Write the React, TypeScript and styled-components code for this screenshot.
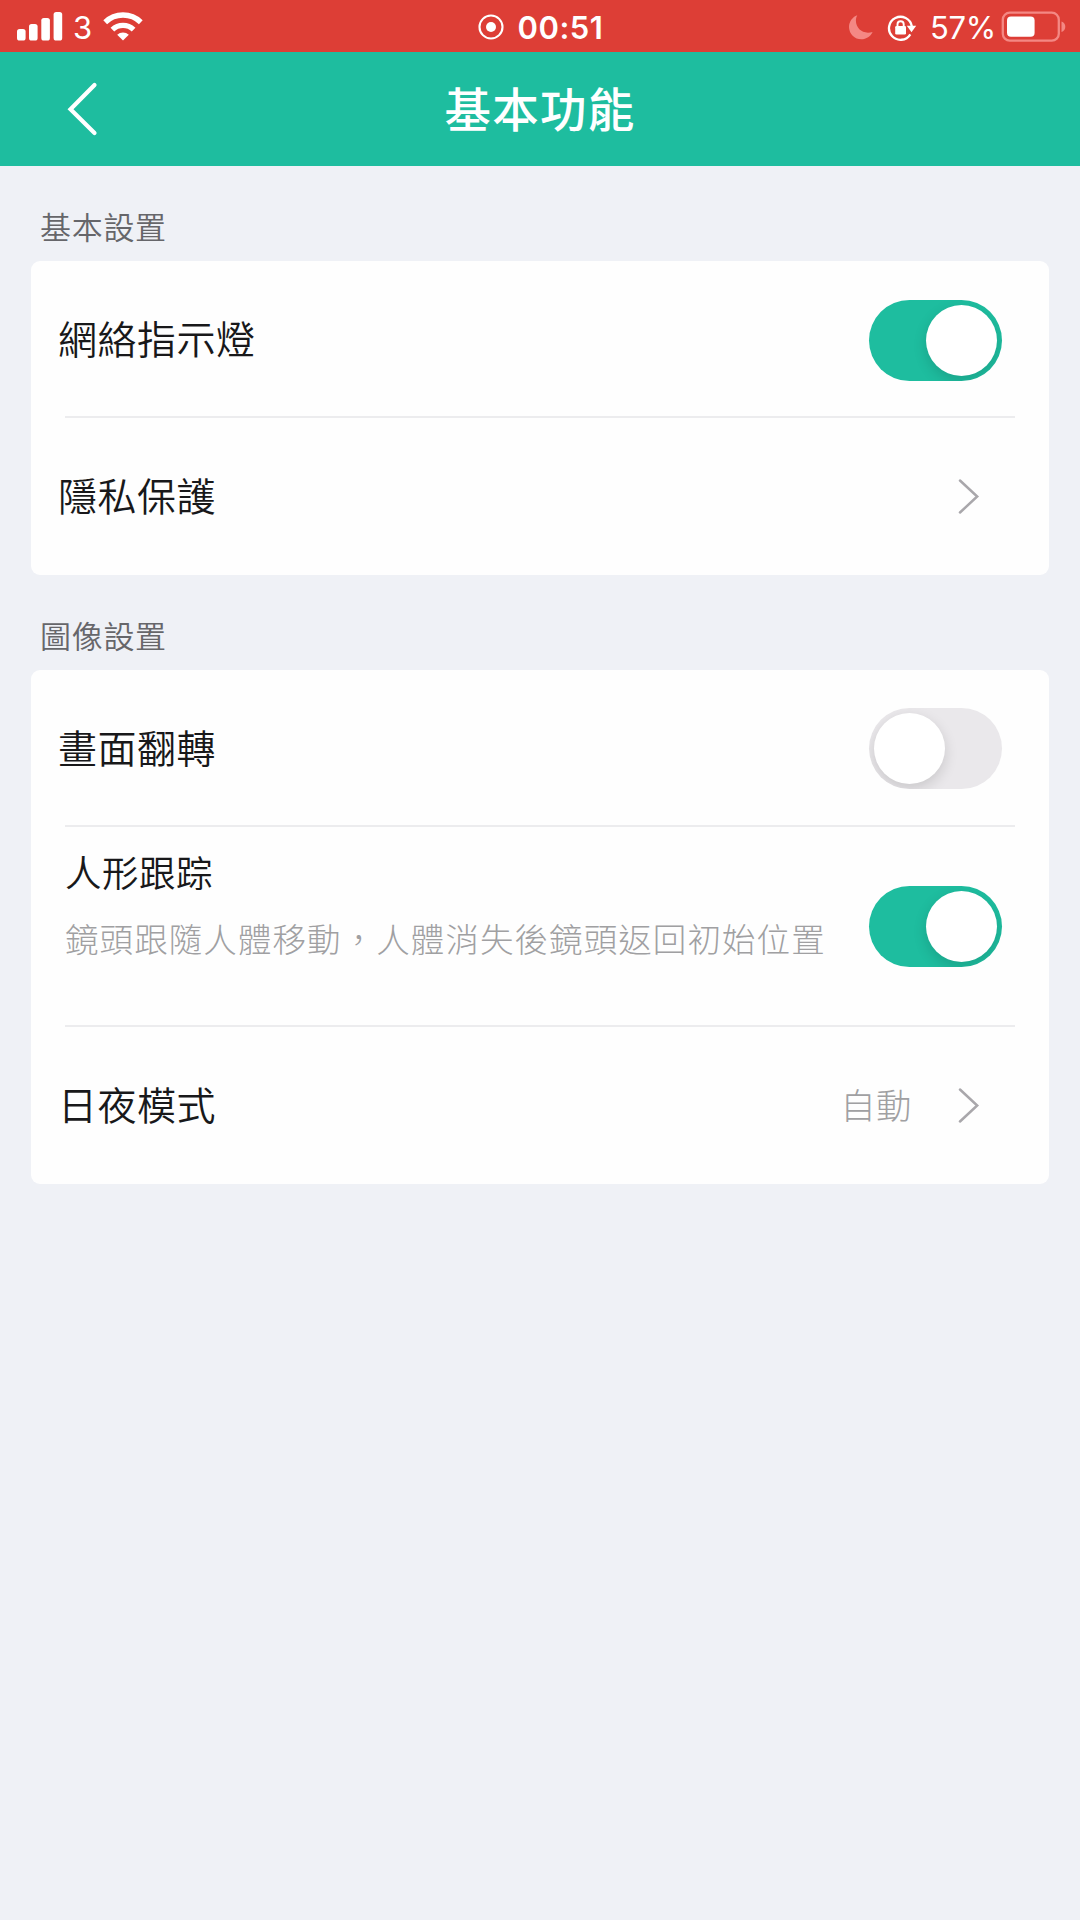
import React, { useState } from "react";
import styled, { createGlobalStyle } from "styled-components";

const GlobalStyle = createGlobalStyle`
  *, *::before, *::after { box-sizing: border-box; }
  body {
    margin: 0;
    background: #eff1f6;
    font-family: Inter, "Noto Sans CJK TC", sans-serif;
  }
`;

const Screen = styled.div`
  width: 1080px;
  min-height: 1920px;
  display: flex;
  flex-direction: column;
  background: #eff1f6;
`;

const StatusBar = styled.div`
  height: 52px;
  padding: 0 14px 0 17px;
  display: grid;
  grid-template-columns: 1fr auto 1fr;
  align-items: center;
  background: #dd3e36;
  color: #fff;
`;

const StatusGroup = styled.div<{ $justify?: string }>`
  display: flex;
  align-items: center;
  justify-content: ${(p) => p.$justify ?? "flex-start"};
  height: 52px;
`;

const StatusText = styled.span<{ $size: number; $weight?: number; $spacing?: number; $gap: string }>`
  font-size: ${(p) => p.$size}px;
  font-weight: ${(p) => p.$weight ?? 400};
  letter-spacing: ${(p) => p.$spacing ?? 0}px;
  margin: ${(p) => p.$gap};
  line-height: 52px;
  padding-top: 3px;
  white-space: nowrap;
`;

const Icon = styled.svg<{ $gap?: string }>`
  display: block;
  flex: none;
  margin: ${(p) => p.$gap ?? "0"};
`;

const NavBar = styled.header`
  height: 114px;
  padding: 0 66px;
  display: grid;
  grid-template-columns: 60px 1fr 60px;
  align-items: center;
  background: #1ebd9f;
`;

const BackButton = styled.button`
  border: 0;
  padding: 0;
  background: none;
  cursor: pointer;
`;

const Title = styled.h1`
  margin: 0;
  padding-bottom: 4px;
  font-family: "Noto Sans CJK TC", sans-serif;
  font-size: 46.5px;
  line-height: 110px;
  font-weight: 500;
  letter-spacing: 1.2px;
  text-align: center;
  color: #fff;
`;

const Content = styled.main`
  padding: 0 31px;
`;

const SectionTitle = styled.h2`
  height: 95px;
  margin: 0;
  padding: 39px 0 0 9px;
  font-size: 31px;
  line-height: 46px;
  font-weight: 350;
  letter-spacing: 0.7px;
  color: #66666a;
`;

const Card = styled.section`
  border-radius: 9px;
  background: #fefefe;
`;

const Divider = styled.hr`
  height: 2px;
  margin: 0 34px;
  border: 0;
  background: #ececee;
`;

const Row = styled.div<{ $height: number; $top?: number }>`
  height: ${(p) => p.$height}px;
  padding: ${(p) => p.$top ?? 0}px 47px 0 27px;
  display: flex;
  align-items: center;
  justify-content: space-between;
`;

const Label = styled.span`
  font-size: 39px;
  line-height: 56px;
  font-weight: 350;
  letter-spacing: 0.5px;
  color: #18181a;
`;

const TextBlock = styled.div`
  align-self: flex-start;
  padding: 20px 0 0 7px;
  display: flex;
  flex-direction: column;
`;

const BlockTitle = styled.span`
  font-size: 36.5px;
  line-height: 52px;
  font-weight: 350;
  letter-spacing: 0.5px;
  color: #18181a;
`;

const Description = styled.span`
  margin-top: 16px;
  font-size: 33.5px;
  line-height: 48px;
  font-weight: 300;
  letter-spacing: 1.08px;
  color: #a0a0a2;
  white-space: nowrap;
`;

const Trailing = styled.div`
  display: flex;
  align-items: center;
  padding-right: 22px;
`;

const Value = styled.span`
  margin-right: 46px;
  padding-top: 2px;
  font-size: 35.5px;
  line-height: 50px;
  font-weight: 300;
  letter-spacing: 0.4px;
  color: #a0a0a2;
`;

const Track = styled.button<{ $on: boolean }>`
  width: 133px;
  height: 81px;
  flex: none;
  padding: 5px;
  border: 0;
  border-radius: 41px;
  display: flex;
  justify-content: ${(p) => (p.$on ? "flex-end" : "flex-start")};
  overflow: hidden;
  background: ${(p) => (p.$on ? "#1ebd9f" : "#eae8eb")};
  cursor: pointer;
`;

const Knob = styled.span`
  width: 71px;
  height: 71px;
  border-radius: 50%;
  background: #fff;
  box-shadow: 0 5px 14px rgba(0, 0, 0, 0.14);
`;

function Toggle({ initial, label }: { initial: boolean; label: string }) {
  const [on, setOn] = useState(initial);
  return (
    <Track $on={on} role="switch" aria-checked={on} aria-label={label} onClick={() => setOn(!on)}>
      <Knob />
    </Track>
  );
}

function Chevron() {
  return (
    <Icon width="22" height="36" viewBox="0 0 22 36" fill="none" stroke="#a9a7ab" strokeWidth="2.5" strokeLinecap="round">
      <path d="M2 1.5 19.2 17.5 2 33.5" />
    </Icon>
  );
}

function Signal() {
  return (
    <Icon width="46" height="30" viewBox="0 0 46 30" fill="#fff">
      <rect x="0" y="18" width="8.6" height="11.5" rx="2.6" />
      <rect x="12" y="13" width="8.6" height="16.5" rx="2.6" />
      <rect x="24.3" y="7" width="8.6" height="22.5" rx="2.6" />
      <rect x="36.6" y="1" width="8.6" height="28.5" rx="2.6" />
    </Icon>
  );
}

function Wifi() {
  return (
    <Icon width="40" height="30" viewBox="0 0 40 30" fill="none" stroke="#fff" strokeWidth="5.4" $gap="0 0 1px 0">
      <path d="M2.2 11.2a25.6 25.6 0 0 1 35.6 0" />
      <path d="M9.4 18.6a15.5 15.5 0 0 1 21.2 0" />
      <path d="M20 29.6 14.2 23.8a8.6 8.6 0 0 1 11.6 0Z" fill="#fff" stroke="none" />
    </Icon>
  );
}

function Recording() {
  return (
    <Icon width="26" height="26" viewBox="0 0 26 26" fill="none" $gap="2px 0 0 0">
      <circle cx="13" cy="13" r="11.5" stroke="#fff" strokeWidth="2.1" />
      <circle cx="13" cy="13" r="5" fill="#fff" />
    </Icon>
  );
}

function Moon() {
  return (
    <Icon width="26" height="26" viewBox="0 0 26 26" fill="#f48884" $gap="2px 13px 0 0">
      <path d="M9.3 1.2C4.3 3 1 7.7 1 13a12.3 12.3 0 0 0 12.3 12.2c5 0 9.4-3 11.3-7.3-1.5.5-3 .8-4.600.8C13 18.700 7.900 13.500 7.900 6.600c0-1.900.5-3.800 1.400-5.400Z" />
    </Icon>
  );
}

function RotationLock() {
  return (
    <Icon width="30" height="28" viewBox="0 0 30 28" fill="none" $gap="3px 12px 0 0">
      <path d="M23.3 20.3A11.5 11.5 0 1 1 24.8 12.3" stroke="#fff" strokeWidth="2.3" />
      <path d="M19.8 11.7h9.4l-4.7 6.5Z" fill="#fff" />
      <rect x="8.2" y="12" width="10.8" height="8.6" rx="1.3" fill="#fff" />
      <path d="M10.500 12.500V10.300a3.100 3.100 0 0 1 6.200 0v2.200" stroke="#fff" strokeWidth="1.9" />
    </Icon>
  );
}

function Battery() {
  return (
    <Icon width="65" height="32" viewBox="0 0 65 32" fill="none" $gap="1px 0 0 0">
      <rect x="1.8" y="1.7" width="56" height="28" rx="7" stroke="#f48884" strokeWidth="2.3" />
      <path d="M60.5 10.5c2.400.8 3.800 2.900 3.800 5.300s-1.400 4.500-3.800 5.300Z" fill="#f48884" />
      <rect x="6" y="5.500" width="27.600" height="20.300" rx="4" fill="#fff" />
    </Icon>
  );
}

export default function App() {
  return (
    <>
      <GlobalStyle />
      <Screen>
        <StatusBar>
          <StatusGroup>
            <Signal />
            <StatusText $size={31} $gap="0 11px 0 10px">3</StatusText>
            <Wifi />
          </StatusGroup>
          <StatusGroup>
            <Recording />
            <StatusText $size={31} $weight={600} $spacing={0.5} $gap="0 2px 0 14px">00:51</StatusText>
          </StatusGroup>
          <StatusGroup $justify="flex-end">
            <Moon />
            <RotationLock />
            <StatusText $size={31} $spacing={-0.3} $gap="0 5px 0 1px">57%</StatusText>
            <Battery />
          </StatusGroup>
        </StatusBar>

        <NavBar>
          <BackButton aria-label="返回">
            <Icon width="32" height="54" viewBox="0 0 32 54" fill="none" stroke="#fff" strokeWidth="4.2" strokeLinecap="round">
              <path d="M28.5 3 4.5 27.2 28.5 51" />
            </Icon>
          </BackButton>
          <Title>基本功能</Title>
        </NavBar>

        <Content>
          <SectionTitle>基本設置</SectionTitle>
          <Card>
            <Row $height={155} $top={3}>
              <Label>網絡指示燈</Label>
              <Toggle initial label="網絡指示燈" />
            </Row>
            <Divider />
            <Row $height={157}>
              <Label>隱私保護</Label>
              <Trailing>
                <Chevron />
              </Trailing>
            </Row>
          </Card>

          <SectionTitle>圖像設置</SectionTitle>
          <Card>
            <Row $height={155} $top={2}>
              <Label>畫面翻轉</Label>
              <Toggle initial={false} label="畫面翻轉" />
            </Row>
            <Divider />
            <Row $height={198} $top={1}>
              <TextBlock>
                <BlockTitle>人形跟踪</BlockTitle>
                <Description>鏡頭跟隨人體移動，人體消失後鏡頭返回初始位置</Description>
              </TextBlock>
              <Toggle initial label="人形跟踪" />
            </Row>
            <Divider />
            <Row $height={157}>
              <Label>日夜模式</Label>
              <Trailing>
                <Value>自動</Value>
                <Chevron />
              </Trailing>
            </Row>
          </Card>
        </Content>
      </Screen>
    </>
  );
}
